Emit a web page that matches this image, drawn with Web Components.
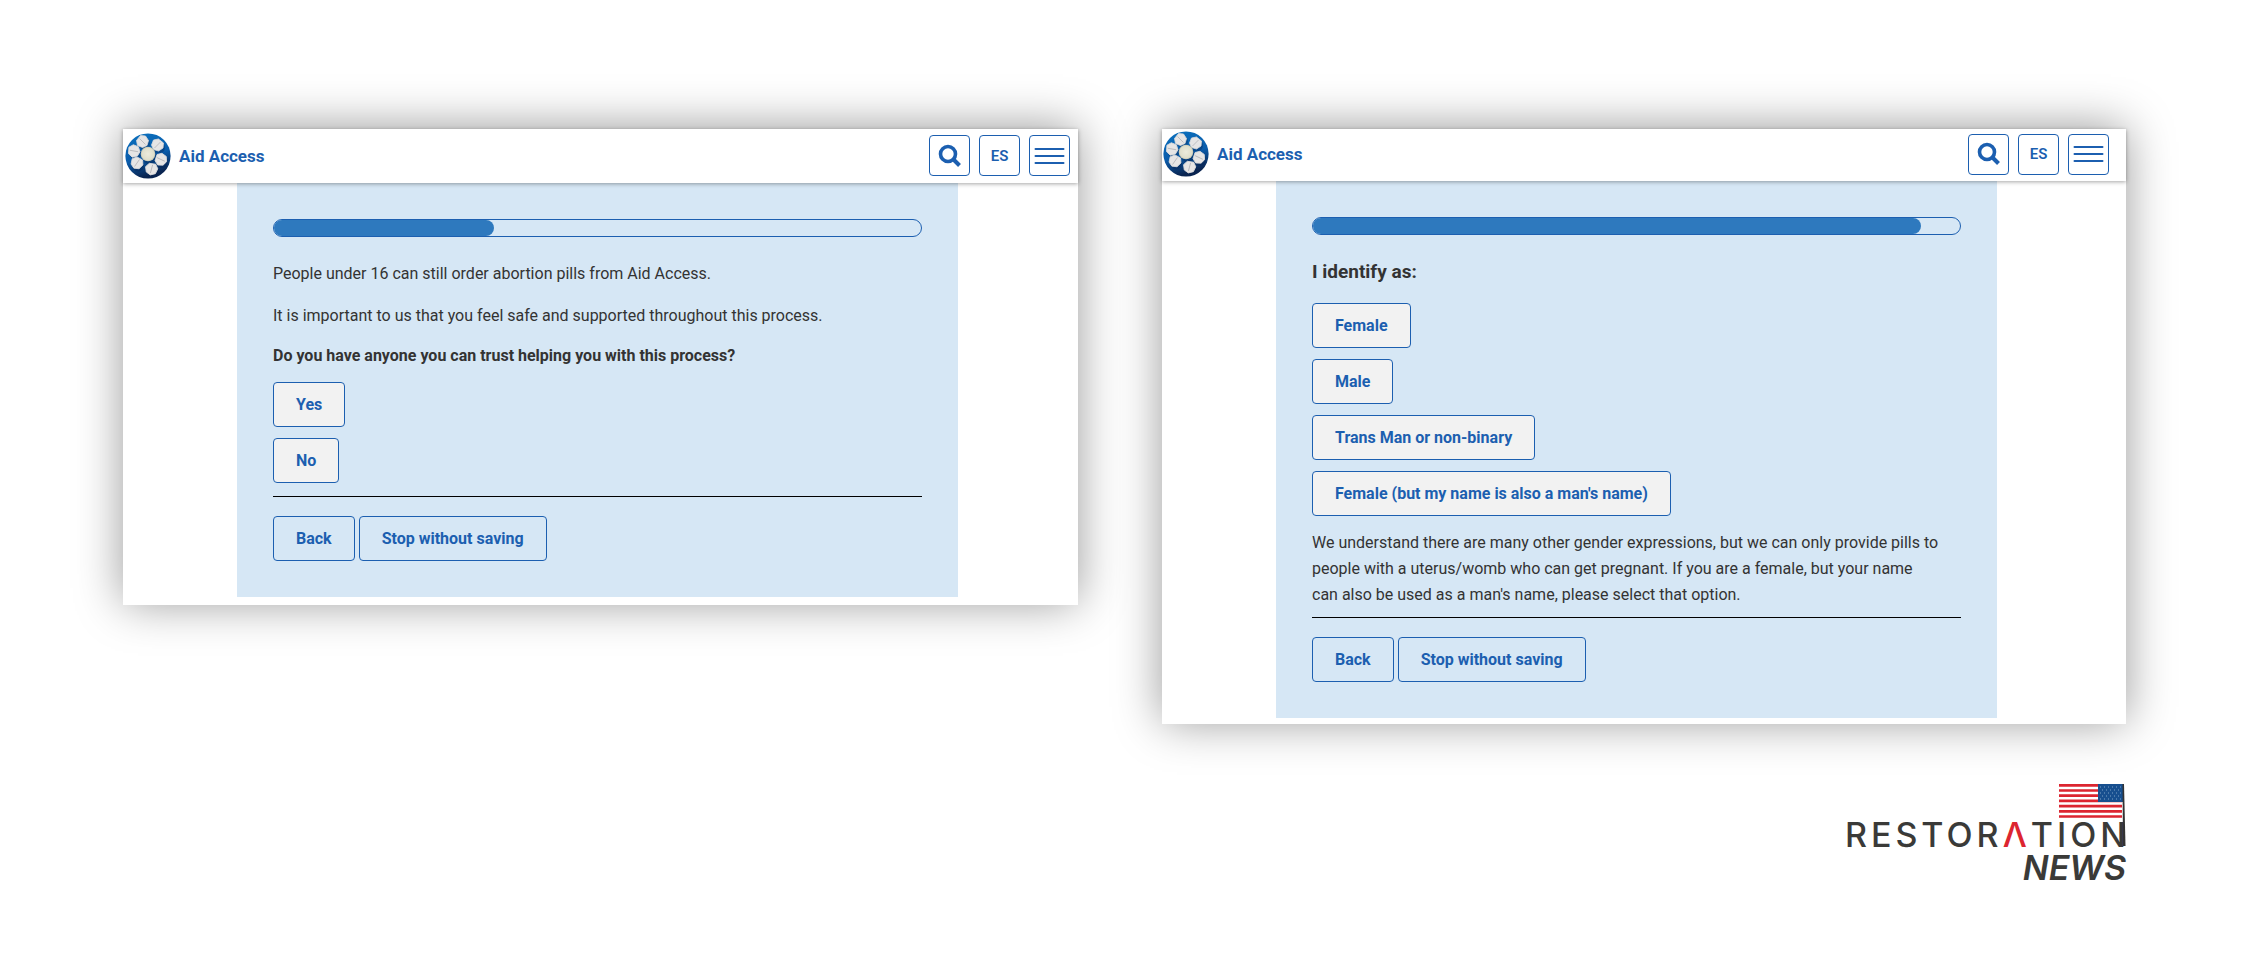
<!DOCTYPE html>
<html lang="en">
<head>
<meta charset="utf-8">
<title>Aid Access – Restoration News</title>
<style>
  body { margin: 0; background: #fff; font-family: Roboto, "Liberation Sans", sans-serif; }
</style>
</head>
<body>
<comparison-page>
  <site-card class="first">
    <site-header slot="header"></site-header>
    <progress-bar value="34"></progress-bar>
    <p>People under 16 can still order abortion pills from Aid Access.</p>
    <p>It is important to us that you feel safe and supported throughout this process.</p>
    <p class="ask"><b>Do you have anyone you can trust helping you with this process?</b></p>
    <choice-list>
      <pill-button filled>Yes</pill-button>
      <pill-button filled>No</pill-button>
    </choice-list>
    <form-actions></form-actions>
  </site-card>
  <site-card class="second">
    <site-header slot="header" compact></site-header>
    <progress-bar value="94"></progress-bar>
    <h2>I identify as:</h2>
    <choice-list>
      <pill-button filled>Female</pill-button>
      <pill-button filled>Male</pill-button>
      <pill-button filled>Trans Man or non-binary</pill-button>
      <pill-button filled>Female (but my name is also a man's name)</pill-button>
    </choice-list>
    <p class="note">We understand there are many other gender expressions, but we can only provide pills to<br> people with a uterus/womb who can get pregnant. If you are a female, but your name<br> can also be used as a man's name, please select that option.</p>
    <form-actions></form-actions>
  </site-card>
  <publisher-logo slot="footer"></publisher-logo>
</comparison-page>

<template id="t-page">
  <style>
    :host { display: block; padding: 129px 124px 60px 123px; }
    main { display: grid; grid-template-columns: 955fr 964fr; gap: 84px; align-items: start; }
    footer { display: flex; justify-content: flex-end; padding-top: 60px; }
  </style>
  <main><slot></slot></main>
  <footer><slot name="footer"></slot></footer>
</template>

<template id="t-card">
  <style>
    :host { display: block; background: #fff; padding-bottom: 8px; box-shadow: 0 -2px 44px rgba(0, 0, 0, .4); }
    :host(.second) { padding-bottom: 6px; }
    section { margin: 0 120px 0 114px; padding: 36px; background: #d6e7f5; color: #333; font-size: 16px; line-height: 26px; }
    :host(.second) section { margin-right: 129px; }
    ::slotted(p) { margin: 0 0 16px; }
    ::slotted(p.ask) { margin: 0 0 15px; line-height: 22px; }
    ::slotted(p.note) { margin: 10px 0 0; }
    ::slotted(h2) { margin: 0 0 18px; font-size: 19px; line-height: 26px; font-weight: 700; }
  </style>
  <slot name="header"></slot>
  <section><slot></slot></section>
</template>

<template id="t-header">
  <style>
    :host { display: block; position: relative; color: #1c5fb0; }
    header { display: flex; align-items: center; height: 54px; padding: 0 8px 1px 2px; background: #fff; box-shadow: 0 1px 4px rgba(0, 0, 0, .35); box-sizing: border-box; }
    :host([compact]) header { height: 52px; padding: 0 17px 2px 1px; }
    a { display: flex; align-items: center; gap: 8px; color: inherit; text-decoration: none; font-size: 17px; font-weight: 700; }
    a svg { width: 46px; height: 46px; }
    nav { display: flex; gap: 9px; margin-left: auto; }
    button { display: grid; place-items: center; width: 41px; height: 41px; padding: 0; border: 1px solid #1c5fb0; border-radius: 4px; background: #fff; color: inherit; font: 600 15px Roboto, "Liberation Sans", sans-serif; }
  </style>
  <header>
    <a href="#">
      <svg viewBox="0 0 46 46" aria-hidden="true">
        <defs>
          <linearGradient id="sea" x1="0" y1="0" x2="0.3" y2="1"><stop offset="0" stop-color="#0b72bf"/><stop offset=".6" stop-color="#0b5cab"/><stop offset="1" stop-color="#0a2450"/></linearGradient>
          <radialGradient id="core"><stop offset="0" stop-color="#ecebdc"/><stop offset=".8" stop-color="#e0dfcc"/><stop offset="1" stop-color="#c2c2ae"/></radialGradient>
          <g id="pill"><path d="M-2 -6 3 -5.500 6 -1 4.500 4 0 6 -5 4 -6 -1z" fill="#e6e5e5" stroke="#dcdbdc" stroke-width=".8"/><path d="M-3 -3 3 3" stroke="#b4b4b8" stroke-width=".8"/></g>
        </defs>
        <circle cx="23" cy="23" r="22.600" fill="url(#sea)"/>
        <g fill="#06204c" opacity=".35"><circle cx="19" cy="10.500" r="6"/><circle cx="34" cy="14.500" r="6"/><circle cx="10.500" cy="20.500" r="6"/><circle cx="37" cy="29" r="6"/><circle cx="13" cy="32.500" r="6"/><circle cx="28" cy="38" r="6"/><circle cx="24.500" cy="23.500" r="7.500"/></g>
        <use href="#pill" x="17.500" y="8.500"/>
        <use href="#pill" transform="translate(32.500 12) rotate(90)"/>
        <use href="#pill" transform="translate(9 18) rotate(-35)"/>
        <use href="#pill" transform="translate(36 26.500) rotate(-20)"/>
        <use href="#pill" transform="translate(12 30) rotate(80)"/>
        <use href="#pill" transform="translate(26.500 36) rotate(60)"/>
        <circle cx="23" cy="21" r="7.300" fill="url(#core)"/>
      </svg>
      <span>Aid Access</span>
    </a>
    <nav>
      <button aria-label="Search"><svg width="24" height="24" viewBox="0 0 24 24" fill="none" stroke="currentColor"><circle cx="10" cy="10" r="7.500" stroke-width="3.600"/><path d="M15.500 15.500 21.500 21.500" stroke-width="4"/></svg></button>
      <button>ES</button>
      <button aria-label="Menu"><svg width="31" height="18" viewBox="0 0 31 18" stroke="currentColor" stroke-width="2" stroke-linecap="round"><path d="M1.500 2H29.500M1.500 9H29.500M1.500 16H29.500"/></svg></button>
    </nav>
  </header>
</template>

<template id="t-progress">
  <style>
    :host { display: block; margin-bottom: 24px; }
    progress { display: block; width: 100%; height: 18px; box-sizing: border-box; appearance: none; border: 1px solid #1c5fb0; border-radius: 9px; background: none; overflow: hidden; }
    progress::-webkit-progress-bar { background: none; }
    progress::-webkit-progress-value { background: #2e79be; border-radius: 0 8px 8px 0; }
  </style>
  <progress max="100" aria-label="Progress"></progress>
</template>

<template id="t-choices">
  <style>
    :host { display: flex; flex-direction: column; align-items: flex-start; gap: 11px; padding-bottom: 4px; }
  </style>
  <slot></slot>
</template>

<template id="t-button">
  <style>
    :host { display: block; }
    button { display: block; padding: 0 22px; height: 45px; border: 1px solid #1c5fb0; border-radius: 4px; background: transparent; color: #1c5fb0; font: 700 16px Roboto, "Liberation Sans", sans-serif; }
    :host([filled]) button { background: #f2f2f2; }
  </style>
  <button type="button"><slot></slot></button>
</template>

<template id="t-actions">
  <style>
    :host { display: block; }
    hr { margin: 9px 0 19px; border: 0; border-top: 1px solid #000; }
    div { display: flex; gap: 4px; }
  </style>
  <hr>
  <div><pill-button>Back</pill-button><pill-button>Stop without saving</pill-button></div>
</template>

<template id="t-logo">
  <style>
    :host { display: grid; justify-items: end; position: relative; color: #3a3a38; font-family: Inter, "Liberation Sans", sans-serif; }
    svg { position: absolute; right: 0; top: 0; }
    .name { padding-top: 34px; font-size: 34px; line-height: 34px; letter-spacing: 4px; margin-right: -4px; font-weight: 500; }
    .red { color: #dc2530; }
    .news { font-size: 34px; line-height: 32px; font-style: italic; font-weight: 600; }
  </style>
  <svg width="67" height="64" viewBox="0 0 67 64" aria-hidden="true">
    <path d="M0 1.300H63M0 6.500H63M0 11.700H63M0 16.900H63M0 22.100H63M0 27.300H63M0 32.500H63" stroke="#dc2530" stroke-width="2.700"/>
    <path d="M39 0H64V18H39z" fill="#174f8f"/>
    <path d="M41 3H63M43 6H63M41 9H63M43 12H63M41 15H63" stroke="#7fa3c7" stroke-width="1" stroke-dasharray="1 3"/>
    <path d="M63.500 0H65L66.500 62H64z" fill="#333"/>
  </svg>
  <div class="name">RESTOR<span class="red">Λ</span>TION</div>
  <div class="news">NEWS</div>
</template>

<script>
  const define = (tag, id, setup) => customElements.define(tag, class extends HTMLElement {
    constructor() {
      super();
      this.attachShadow({ mode: 'open' }).append(document.getElementById(id).content.cloneNode(true));
    }
    connectedCallback() { if (setup) setup(this); }
  });
  define('pill-button', 't-button');
  define('choice-list', 't-choices');
  define('form-actions', 't-actions');
  define('progress-bar', 't-progress', el => {
    el.shadowRoot.querySelector('progress').value = Number(el.getAttribute('value'));
  });
  define('site-header', 't-header');
  define('site-card', 't-card');
  define('publisher-logo', 't-logo');
  define('comparison-page', 't-page');
</script>
</body>
</html>
